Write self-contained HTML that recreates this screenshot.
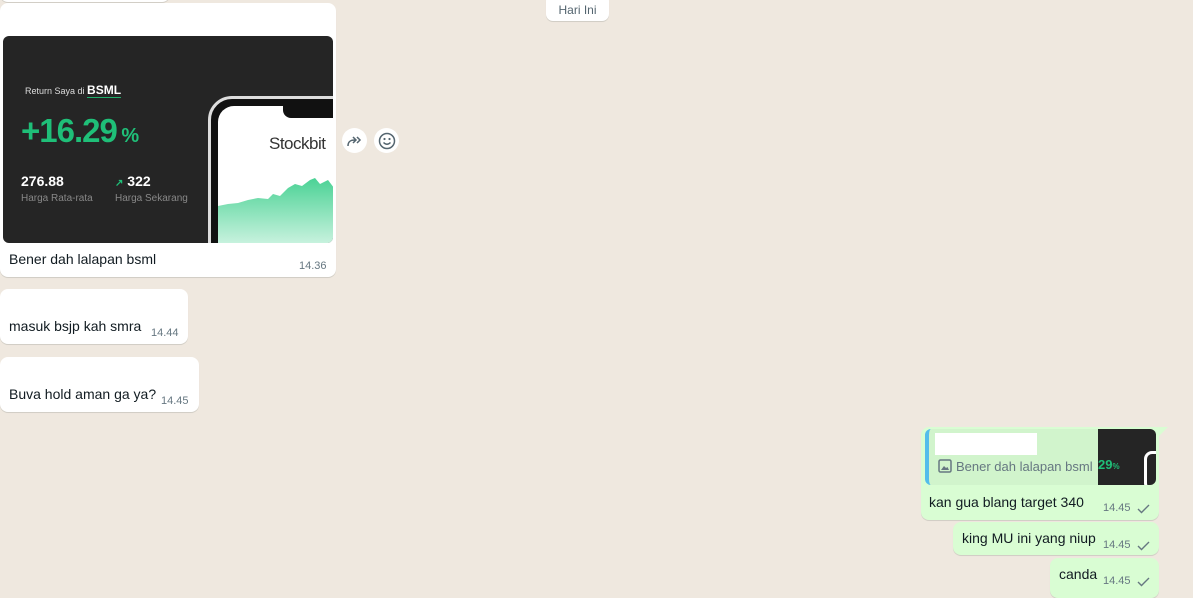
<!DOCTYPE html>
<html><head><meta charset="utf-8"><style>
*{margin:0;padding:0;box-sizing:border-box}
body{width:1193px;height:592px;overflow:hidden;background:#efe8df;font-family:"Liberation Sans",Roboto,sans-serif;color:#111b21;position:relative}
.b{position:absolute;background:#fff;border-radius:8px;box-shadow:0 1px 0.5px rgba(11,20,26,.13)}
.g{background:#d9fdd3}
.t{position:absolute;font-size:14px}
.tm{position:absolute;font-size:11px;color:#667781}
.pill{position:absolute;left:546px;top:-6px;width:63px;height:27px;background:#fff;border-radius:7px;font-size:12px;color:#54656f;text-align:center;padding-top:9px;box-shadow:0 1px 0.5px rgba(11,20,26,.13)}
.circ{position:absolute;width:25px;height:25px;border-radius:50%;background:#fff;top:128px;display:flex;align-items:center;justify-content:center}
.ck{position:absolute;width:13px;height:10px}
</style></head><body>
<div class="b" style="left:0;top:-20px;width:170px;height:22px"></div>
<div class="pill">Hari Ini</div>

<div class="b" style="left:0;top:3px;width:336px;height:274px">
 <div style="position:absolute;left:3px;top:33px;width:330px;height:207px;background:#252525;border-radius:6px;overflow:hidden">
  <div style="position:absolute;left:22px;top:47px;font-size:9px;color:#ddd">Return Saya di <b style="font-size:12px;color:#fff;border-bottom:1px solid #1fae6a">BSML</b></div>
  <div style="position:absolute;left:18px;top:76px;font-size:33px;font-weight:bold;color:#1fbf78;letter-spacing:-1px">+16.29<span style="font-size:20px"> %</span></div>
  <div style="position:absolute;left:18px;top:137px;font-size:14px;font-weight:bold;color:#fff">276.88</div>
  <div style="position:absolute;left:18px;top:157px;font-size:10px;color:#888">Harga Rata-rata</div>
  <div style="position:absolute;left:112px;top:137px;font-size:14px;font-weight:bold;color:#fff"><span style="color:#1fbf78;font-size:10px">↗</span> 322</div>
  <div style="position:absolute;left:112px;top:157px;font-size:10px;color:#888">Harga Sekarang</div>
  <div style="position:absolute;left:205px;top:60px;width:150px;height:170px;border:3px solid #ddd;border-radius:24px;background:#111"></div>
  <div style="position:absolute;left:215px;top:70px;width:130px;height:150px;background:#fff;border-radius:16px 0 0 0;overflow:hidden">
   <div style="position:absolute;left:65px;top:0;width:70px;height:12px;background:#111;border-radius:0 0 0 8px"></div>
   <div style="position:absolute;left:51px;top:28px;font-size:17px;color:#333;letter-spacing:-0.5px">Stockbit</div>
   <svg style="position:absolute;left:0;top:60px" width="130" height="90"><defs><linearGradient id="a" x1="0" y1="0" x2="0" y2="1"><stop offset="0" stop-color="#3fcf8e"/><stop offset="1" stop-color="#e0f8ec"/></linearGradient></defs><path d="M0 40 L10 38 L20 37 L30 34 L40 32 L50 33 L55 28 L62 30 L70 22 L77 18 L84 20 L92 14 L97 12 L102 18 L110 14 L116 22 L120 10 L130 6 L130 90 L0 90Z" fill="url(#a)"/></svg>
  </div>
 </div>
 <div class="t" style="left:9px;top:248px">Bener dah lalapan bsml</div>
 <div class="tm" style="left:299px;top:257px">14.36</div>
</div>
<div class="circ" style="left:342px"><svg width="16" height="12" viewBox="0 0 16 12"><path d="M1 11 C1 6 4 5 8 5 M6 2 L9 5 L6 8 M10 2 L13 5 L10 8" stroke="#54656f" stroke-width="1.5" fill="none"/></svg></div>
<div class="circ" style="left:374px"><svg width="18" height="18" viewBox="0 0 18 18"><circle cx="9" cy="9" r="7.5" stroke="#54656f" stroke-width="1.5" fill="none"/><circle cx="6.5" cy="7" r="1.1" fill="#54656f"/><circle cx="11.5" cy="7" r="1.1" fill="#54656f"/><path d="M5.5 10.5 Q9 14 12.5 10.5" stroke="#54656f" stroke-width="1.4" fill="none"/></svg></div>

<div class="b" style="left:0;top:289px;width:188px;height:55px">
 <div class="t" style="left:9px;top:29px">masuk bsjp kah smra</div>
 <div class="tm" style="left:151px;top:38px">14.44</div>
</div>
<div class="b" style="left:0;top:357px;width:199px;height:55px">
 <div class="t" style="left:9px;top:29px">Buva hold aman ga ya?</div>
 <div class="tm" style="left:161px;top:38px">14.45</div>
</div>

<svg style="position:absolute;left:1155px;top:427px" width="14" height="12"><path d="M0 0 L13 0 L4 9 Z" fill="#d9fdd3"/></svg>
<div class="b g" style="left:921px;top:427px;width:238px;height:93px;border-radius:8px 0 8px 8px">
 <div style="position:absolute;left:4px;top:2px;width:231px;height:56px;background:#d1f4cc;border-radius:6px;overflow:hidden;border-left:4px solid #53bdeb">
  <div style="position:absolute;left:6px;top:4px;width:102px;height:22px;background:#fff"></div>
  <svg style="position:absolute;left:9px;top:30px" width="14" height="14"><rect x="1" y="1" width="12" height="12" rx="1.5" stroke="#667781" stroke-width="1.5" fill="none"/><path d="M3 11 L6 7 L8 9 L9.5 8 L11 11Z" fill="#667781"/></svg>
  <div style="position:absolute;left:27px;top:30px;font-size:13px;color:#667781">Bener dah lalapan bsml</div>
  <div style="position:absolute;left:169px;top:0;width:58px;height:56px;background:#252525">
   <div style="position:absolute;left:0;top:28px;font-size:13px;font-weight:bold;color:#1fbf78">29<span style="font-size:8px">%</span></div>
   <div style="position:absolute;left:46px;top:22px;width:20px;height:40px;border:3px solid #fff;border-radius:8px"></div>
  </div>
 </div>
 <div class="t" style="left:8px;top:67px">kan gua blang target 340</div>
 <div class="tm" style="left:182px;top:75px">14.45</div>
 <svg class="ck" style="left:216px;top:77px"><path d="M1 5 L4.5 8.5 L12 1" stroke="#667781" stroke-width="1.4" fill="none"/></svg>
</div>
<div class="b g" style="left:953px;top:522px;width:206px;height:33px">
 <div class="t" style="left:9px;top:8px">king MU ini yang niup</div>
 <div class="tm" style="left:150px;top:17px">14.45</div>
 <svg class="ck" style="left:184px;top:19px"><path d="M1 5 L4.5 8.5 L12 1" stroke="#667781" stroke-width="1.4" fill="none"/></svg>
</div>
<div class="b g" style="left:1050px;top:558px;width:109px;height:40px">
 <div class="t" style="left:9px;top:8px">canda</div>
 <div class="tm" style="left:53px;top:17px">14.45</div>
 <svg class="ck" style="left:87px;top:19px"><path d="M1 5 L4.5 8.5 L12 1" stroke="#667781" stroke-width="1.4" fill="none"/></svg>
</div>
</body></html>
